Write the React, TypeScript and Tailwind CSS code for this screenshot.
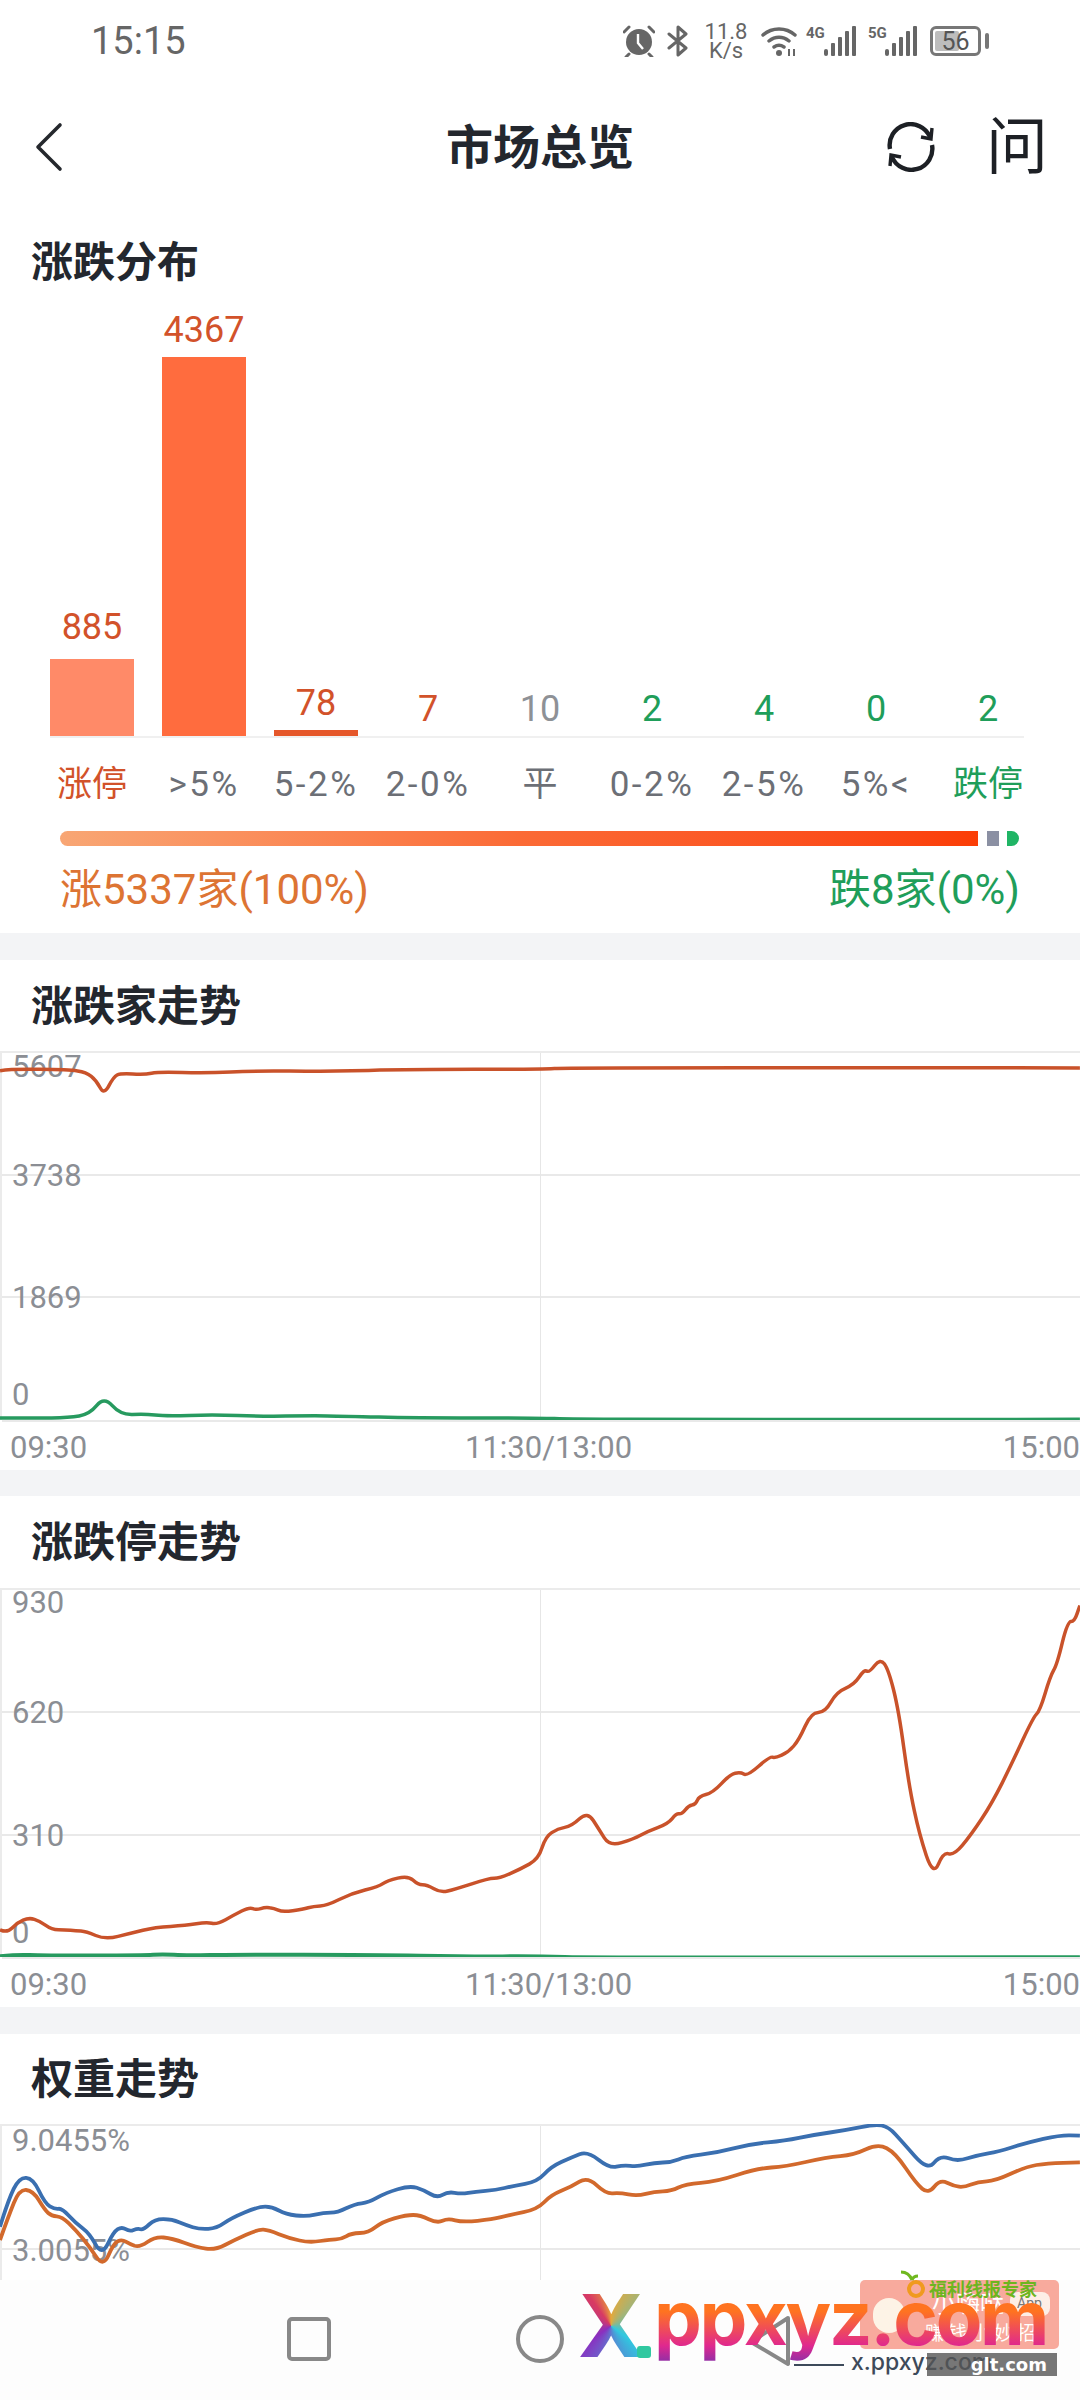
const font = 'font-["Roboto","Noto_Sans_CJK_SC",sans-serif]'

type Pt = [number, number]

// points were read off the screenshot: px = x / 1.452, py relative to chart top
function toPath(pts: Pt[], scaleY: number, topY: number): string {
  const p = pts.map(([x, y]) => [x / 1.452, y / scaleY - topY])
  let d = `M${p[0][0].toFixed(1)} ${p[0][1].toFixed(1)}`
  for (let i = 1; i < p.length - 1; i++) {
    const mx = (p[i][0] + p[i + 1][0]) / 2
    const my = (p[i][1] + p[i + 1][1]) / 2
    d += ` Q${p[i][0].toFixed(1)} ${p[i][1].toFixed(1)} ${mx.toFixed(1)} ${my.toFixed(1)}`
  }
  const last = p[p.length - 1]
  return `${d} L${last[0].toFixed(1)} ${last[1].toFixed(1)}`
}

const breadthUp: Pt[] = [[0,338],[15,333],[100,335],[125,342],[140,365],[151,406],[165,355],[175,345],[210,349],[230,341],[300,345],[370,338],[470,340],[600,334],[780,334],[830,329],[1568,330]]
const breadthDown: Pt[] = [[0,1310],[50,1311],[100,1309],[130,1300],[151,1250],[175,1302],[210,1299],[240,1305],[310,1301],[380,1306],[450,1304],[500,1305],[600,1310],[780,1310],[830,1314],[1000,1314],[1300,1316],[1568,1314]]

const limitUp: Pt[] = [[0,1275],[10,1285],[25,1255],[42,1240],[58,1250],[75,1275],[95,1275],[110,1278],[125,1280],[153,1304],[190,1285],[225,1268],[270,1263],[300,1253],[315,1260],[340,1232],[362,1210],[372,1218],[385,1210],[398,1213],[410,1224],[440,1216],[455,1207],[475,1205],[510,1170],[550,1150],[562,1133],[593,1118],[607,1145],[620,1145],[640,1168],[660,1158],[710,1126],[725,1126],[755,1100],[782,1070],[792,1005],[810,982],[830,975],[853,932],[870,985],[885,1033],[920,1012],[940,990],[970,968],[982,938],[990,940],[1000,915],[1010,912],[1015,888],[1035,878],[1060,825],[1075,818],[1085,830],[1118,772],[1125,778],[1145,760],[1160,725],[1178,645],[1198,645],[1215,585],[1240,565],[1255,520],[1262,530],[1278,488],[1290,520],[1305,640],[1320,860],[1335,1000],[1355,1120],[1370,1050],[1385,1060],[1410,1000],[1440,910],[1470,790],[1500,660],[1510,640],[1525,540],[1535,505],[1550,380],[1560,382],[1568,335]]
const limitDown: Pt[] = [[0,1352],[25,1347],[60,1350],[210,1350],[235,1346],[270,1350],[340,1347],[540,1348],[680,1353],[780,1352],[860,1356],[1568,1355]]

const weightBlue: Pt[] = [[0,620],[12,540],[28,472],[48,475],[65,550],[80,568],[90,565],[110,610],[130,640],[148,708],[165,635],[177,620],[188,635],[200,625],[208,630],[225,597],[250,598],[270,615],[290,628],[315,625],[335,595],[375,560],[395,560],[415,583],[445,590],[470,578],[490,578],[515,552],[535,548],[560,518],[595,497],[615,510],[635,534],[650,515],[670,522],[690,515],[720,510],[745,498],[780,485],[800,440],[830,412],[853,393],[885,445],[905,435],[925,440],[950,428],[975,427],[995,410],[1040,398],[1090,372],[1140,362],[1180,345],[1230,330],[1270,313],[1290,320],[1310,365],[1347,452],[1365,405],[1390,425],[1420,405],[1450,395],[1490,368],[1540,345],[1568,347]]
const weightOrange: Pt[] = [[0,660],[12,590],[28,508],[48,512],[65,570],[75,588],[90,590],[110,630],[130,680],[150,742],[165,670],[177,658],[188,672],[203,682],[225,650],[250,655],[285,682],[313,690],[340,660],[375,628],[390,630],[420,655],[450,668],[480,658],[495,658],[510,640],[535,638],[555,605],[590,585],[610,585],[635,610],[650,595],[672,607],[715,598],[740,585],[780,568],[800,525],[830,500],[853,470],[880,522],[900,518],[925,528],[950,515],[975,513],[995,492],[1040,485],[1100,445],[1140,440],[1200,412],[1240,405],[1275,371],[1300,398],[1330,490],[1348,522],[1365,478],[1385,498],[1400,502],[1420,485],[1445,483],[1490,440],[1520,430],[1568,427]]

const bars = [
  { value: '885', label: '涨停', h: 77, bar: 'bg-[#ff8a68]', text: 'text-[#d2522a]', labelText: 'text-[#d2522a]', gap: 'mb-[14px]' },
  { value: '4367', label: '>5%', h: 380, bar: 'bg-[#ff6c3e]', text: 'text-[#d2522a]', labelText: 'text-[#6c6f76] tracking-[2.5px]', gap: 'mb-[9px]' },
  { value: '78', label: '5-2%', h: 6, bar: 'bg-[#e5572a]', text: 'text-[#d2522a]', labelText: 'text-[#6c6f76] tracking-[2.5px]', gap: 'mb-[9px]' },
  { value: '7', label: '2-0%', h: 0, bar: '', text: 'text-[#d2522a]', labelText: 'text-[#6c6f76] tracking-[2.5px]', gap: 'mb-[9px]' },
  { value: '10', label: '平', h: 0, bar: '', text: 'text-[#8e9196]', labelText: 'text-[#6c6f76]', gap: 'mb-[9px]' },
  { value: '2', label: '0-2%', h: 0, bar: '', text: 'text-[#1f9e5a]', labelText: 'text-[#6c6f76] tracking-[2.5px]', gap: 'mb-[9px]' },
  { value: '4', label: '2-5%', h: 0, bar: '', text: 'text-[#1f9e5a]', labelText: 'text-[#6c6f76] tracking-[2.5px]', gap: 'mb-[9px]' },
  { value: '0', label: '5%<', h: 0, bar: '', text: 'text-[#1f9e5a]', labelText: 'text-[#6c6f76] tracking-[2.5px]', gap: 'mb-[9px]' },
  { value: '2', label: '跌停', h: 0, bar: '', text: 'text-[#1f9e5a]', labelText: 'text-[#1f9e5a]', gap: 'mb-[9px]' },
]

function SignalBars() {
  return (
    <svg width="33" height="30" viewBox="0 0 33 30" className="text-[#666]">
      <rect x="0" y="23" width="4" height="7" rx="2" fill="currentColor" />
      <rect x="7" y="17" width="4" height="13" rx="1" fill="currentColor" />
      <rect x="14" y="11" width="4" height="19" rx="1" fill="currentColor" />
      <rect x="21" y="5" width="4" height="25" rx="1" fill="currentColor" />
      <rect x="28" y="0" width="4" height="30" rx="1" fill="currentColor" />
    </svg>
  )
}

function StatusBar() {
  return (
    <div className="flex h-[82px] items-center pl-[91px] pr-[91px] text-[#666]">
      <span className="text-[38px] leading-none">15:15</span>
      <div className="ml-auto flex items-center">
        <svg width="32" height="32" viewBox="0 0 32 32" className="mr-[12px]">
          <circle cx="16" cy="17" r="13" fill="#666" />
          <path d="M15 9v9l5 6" stroke="#fff" strokeWidth="2.4" fill="none" />
          <path d="M1 7l5-5M31 7l-5-5M6 29l-3 3M26 29l3 3" stroke="#666" strokeWidth="3" strokeLinecap="round" />
        </svg>
        <svg width="21" height="32" viewBox="0 0 21 32" className="mr-[17px]">
          <path d="M2 9l17 14-8 7V2l8 7L2 23" stroke="#666" strokeWidth="3" fill="none" strokeLinejoin="round" strokeLinecap="round" />
        </svg>
        <div className="mr-[14px] flex w-[42px] flex-col items-center text-[22px] leading-[19px]">
          <span>11.8</span>
          <span>K/s</span>
        </div>
        <svg width="36" height="32" viewBox="0 0 36 32" className="mr-[9px]">
          <path d="M2 10c9-8 23-8 32 0M8 16c6-5 14-5 20 0M13 22c3-2 7-2 10 0" stroke="#666" strokeWidth="3.4" fill="none" strokeLinecap="round" />
          <circle cx="18" cy="28" r="3" fill="#666" />
          <path d="M28 31v-7M33 24v7" stroke="#666" strokeWidth="2" />
        </svg>
        <div className="relative mr-[11px] flex w-[51px] justify-end">
          <span className="absolute left-0 top-0 text-[15px] font-bold leading-[15px]">4G</span>
          <SignalBars />
        </div>
        <div className="relative mr-[12px] flex w-[50px] justify-end">
          <span className="absolute left-0 top-0 text-[15px] font-bold leading-[15px]">5G</span>
          <SignalBars />
        </div>
        <div className="flex items-center gap-[4px]">
          <div className="relative flex h-[30px] w-[51px] items-center justify-center rounded-[6px] border-[3px] border-[#777]">
            <div className="absolute bottom-[2px] left-[2px] top-[2px] w-[24px] rounded-[2px] bg-[#bdbdbd]" />
            <span className="relative text-[25px] leading-none text-[#555]">56</span>
          </div>
          <div className="h-[16px] w-[4px] rounded-full bg-[#777]" />
        </div>
      </div>
    </div>
  )
}

function Header() {
  return (
    <div className="relative flex h-[130px] items-center justify-center">
      <svg width="30" height="50" viewBox="0 0 30 50" className="absolute left-[34px] top-[40px]">
        <path d="M26 3L4 25l22 22" stroke="#25282d" strokeWidth="3.6" fill="none" strokeLinecap="round" strokeLinejoin="round" />
      </svg>
      <span className="text-[47px] font-bold leading-none text-[#23272e]">市场总览</span>
      <svg width="50" height="50" viewBox="0 0 50 50" className="absolute left-[886px] top-[40px]">
        <path d="M4 27A21 21 0 0 1 44 15" stroke="#1d2025" strokeWidth="4.4" fill="none" />
        <path d="M46 23A21 21 0 0 1 6 35" stroke="#1d2025" strokeWidth="4.4" fill="none" />
        <path d="M46 6l-1 11-10-2" stroke="#1d2025" strokeWidth="3.4" fill="none" />
        <path d="M4 44l1-11 10 2" stroke="#1d2025" strokeWidth="3.4" fill="none" />
      </svg>
      <span className="absolute left-[986px] top-[35px] text-[62px] leading-none text-[#1d2025]">问</span>
    </div>
  )
}

function SectionTitle({ children, h }: { children: string; h: string }) {
  return (
    <div className={`flex items-center pl-[31px] pt-[2px] text-[42px] font-semibold leading-none text-[#23272e] ${h}`}>{children}</div>
  )
}

function Distribution() {
  return (
    <div className="h-[721px]">
      <SectionTitle h="h-[100px]">涨跌分布</SectionTitle>
      <div className="mx-[50px] flex h-[426px] w-[974px] gap-[28px] border-b-2 border-[#f0f0f0]">
        {bars.map((b, i) => (
          <div key={i} className="flex w-[84px] shrink-0 flex-col items-center justify-end">
            <span className={`text-[36px] leading-[36px] ${b.text} ${b.gap}`}>{b.value}</span>
            {b.h > 0 && <div className={`w-full ${b.bar}`} style={{ height: b.h }} />}
          </div>
        ))}
      </div>
      <div className="mx-[50px] mt-[24px] flex gap-[28px]">
        {bars.map((b, i) => (
          <div key={i} className={`flex h-[44px] w-[84px] shrink-0 items-center justify-center whitespace-nowrap text-[35px] leading-none ${b.labelText}`}>
            {b.label}
          </div>
        ))}
      </div>
      <div className="ml-[60px] mt-[25px] flex h-[15px] w-[959px] items-stretch">
        <div className="w-[918px] rounded-l-full bg-linear-to-r from-[#f8a674] via-[#fb6a35] to-[#fb3d05]" />
        <div className="ml-[9px] w-[12px] bg-[#8b90a3]" />
        <div className="ml-[8px] w-[12px] rounded-r-full bg-[#20b565]" />
      </div>
      <div className="mx-[60px] mt-[22px] flex items-center justify-between text-[42px] leading-[44px]">
        <span className="text-[#dd7433]">涨5337家(100%)</span>
        <span className="text-[#1f9e5a]">跌8家(0%)</span>
      </div>
    </div>
  )
}

function Band({ h }: { h: string }) {
  return <div className={`bg-[#f3f4f6] ${h}`} />
}

function YLabel({ top, children }: { top: string; children: string }) {
  return <span className={`absolute left-[10px] text-[31px] leading-[30px] text-[#8b8e94] ${top}`}>{children}</span>
}

function ChartFrame({ children, h, rows }: { children: React.ReactNode; h: string; rows: string }) {
  return (
    <div className={`relative w-full border-l-2 border-t-2 border-[#ebebeb] ${h}`}>
      <div className={`absolute inset-0 grid ${rows}`}>
        <div className="border-b-2 border-[#e9e9e9]" />
        <div className="border-b-2 border-[#e9e9e9]" />
        <div className="border-b-2 border-[#e9e9e9]" />
      </div>
      <div className="absolute bottom-0 left-[538px] top-0 w-px bg-[#e6e6e6]" />
      {children}
    </div>
  )
}

function TimeAxis() {
  return (
    <div className="relative flex h-[50px] items-center justify-between pl-[10px] pt-[5px] text-[31px] leading-none text-[#8b8e94]">
      <span>09:30</span>
      <span className="absolute left-[465px]">11:30/13:00</span>
      <span>15:00</span>
    </div>
  )
}

function Line({ d, color, w = 3.5 }: { d: string; color: string; w?: number }) {
  return <path d={d} stroke={color} strokeWidth={w} fill="none" strokeLinejoin="round" />
}

function App() {
  return (
    <div className={`relative flex h-[2400px] w-[1080px] flex-col overflow-hidden bg-white ${font}`}>
      <div className="flex-1 overflow-hidden">
        <StatusBar />
        <Header />
        <Distribution />

        <Band h="h-[27px]" />
        <SectionTitle h="h-[91px]">涨跌家走势</SectionTitle>
        <ChartFrame h="h-[369px]" rows="grid-rows-[123px_122px_124px]">
          <YLabel top="top-[-1px]">5607</YLabel>
          <YLabel top="top-[108px]">3738</YLabel>
          <YLabel top="top-[230px]">1869</YLabel>
          <YLabel top="top-[327px]">0</YLabel>
          <svg width="1080" height="369" className="absolute left-[-2px] top-[-2px]">
            <Line d={toPath(breadthUp, 2.8, 101)} color="#c9522a" />
            <Line d={toPath(breadthDown, 2.8, 101)} color="#279a5f" />
          </svg>
        </ChartFrame>
        <TimeAxis />

        <Band h="h-[26px]" />
        <SectionTitle h="h-[92px]">涨跌停走势</SectionTitle>
        <ChartFrame h="h-[369px]" rows="grid-rows-[123px_123px_123px]">
          <YLabel top="top-[-2px]">930</YLabel>
          <YLabel top="top-[108px]">620</YLabel>
          <YLabel top="top-[231px]">310</YLabel>
          <YLabel top="top-[328px]">0</YLabel>
          <svg width="1080" height="369" className="absolute left-[-2px] top-[-2px]">
            <Line d={toPath(limitUp, 2.9, 98)} color="#c9522a" />
            <Line d={toPath(limitDown, 2.9, 98)} color="#279a5f" w={4} />
          </svg>
        </ChartFrame>
        <TimeAxis />

        <Band h="h-[27px]" />
        <SectionTitle h="h-[90px]">权重走势</SectionTitle>
        <ChartFrame h="h-[369px]" rows="grid-rows-[124px_124px_121px]">
          <YLabel top="top-[0px]">9.0455%</YLabel>
          <YLabel top="top-[110px]">3.0055%</YLabel>
          <svg width="1080" height="169" className="absolute left-[-2px] top-[-2px]">
            <Line d={toPath(weightOrange, 3, 104)} color="#d2692c" w={3.8} />
            <Line d={toPath(weightBlue, 3, 104)} color="#3a6fb0" w={3.8} />
          </svg>
        </ChartFrame>
      </div>

      <div className="relative flex h-[120px] shrink-0 items-center bg-[#fdfdfd]">
        <div className="ml-[287px] mt-[-2px] h-[44px] w-[44px] rounded-[5px] border-4 border-[#888]" />
        <div className="ml-[185px] mt-[-2px] h-[48px] w-[48px] rounded-full border-4 border-[#888]" />
        <svg width="44" height="52" viewBox="0 0 44 52" className="ml-[184px] mt-[2px]">
          <path d="M40 3L3 27l37 22z" stroke="#888" strokeWidth="4" fill="none" strokeLinejoin="round" />
        </svg>
      </div>

      {/* watermark layer */}
      <div className="absolute left-[860px] top-[2280px] h-[69px] w-[199px] overflow-hidden rounded-[5px] bg-[#f8aa9d]">
        <div className="absolute left-[13px] top-[18px] h-[35px] w-[32px] rounded-full bg-[#fdf3e6]" />
        <span className="absolute left-[72px] top-[12px] text-[24px] leading-none text-white">小嗨哒</span>
        <div className="absolute left-[150px] top-[12px] h-[24px] w-[40px] rounded-[8px] bg-[#fdeee6]" />
        <span className="absolute left-[157px] top-[16px] text-[14px] leading-none text-[#777]">App</span>
        <span className="absolute left-[65px] top-[44px] text-[19px] leading-none tracking-[4px] text-white">赚钱小妙招</span>
      </div>
      <svg width="26" height="30" viewBox="0 0 26 30" className="absolute left-[899px] top-[2270px]">
        <circle cx="17" cy="19" r="7" stroke="#f09a1e" strokeWidth="4" fill="none" />
        <path d="M2 2c5 0 9 3 11 8M13 10c1-3 3-4 6-4" stroke="#6fb81f" strokeWidth="3" fill="none" />
      </svg>
      <span className="absolute left-[929px] top-[2281px] text-[18px] font-bold leading-[18px] text-[#6db51f]">福利线报专家</span>

      <span className="absolute left-[578px] top-[2271px] bg-[conic-gradient(at_50%_50%,#e8a838,#30c8e0_35%,#8a2fc0_65%,#d83a62_90%,#e8a838)] bg-clip-text font-['Inter'] text-[87px] font-extrabold leading-[110px] text-transparent">X</span>
      <div className="absolute left-[637px] top-[2346px] h-[12px] w-[14px] rounded-[3px] bg-[#30c8a0]" />
      <span className="absolute left-[654px] top-[2262px] bg-[linear-gradient(to_bottom,#ff7320_45%,#e0288e_76%,#8a2fa8_92%)] bg-clip-text font-['Inter'] text-[76px] font-bold leading-[110px] tracking-[-2.3px] text-transparent">ppxyz.com</span>

      <div className="absolute left-[794px] top-[2364px] h-[2px] w-[50px] bg-[#3d4a5a]" />
      <span className="absolute left-[851px] top-[2346px] font-['Inter'] text-[23px] font-medium leading-[32px] text-[#3d4a5a]">x.ppxyz.com</span>
      <div className="absolute left-[927px] top-[2353px] flex h-[23px] w-[130px] items-center justify-end bg-[#555]/80 pr-[10px] font-['DejaVu_Sans'] text-[18px] font-bold leading-none text-white">
        glt.com
      </div>
    </div>
  )
}

export default App
